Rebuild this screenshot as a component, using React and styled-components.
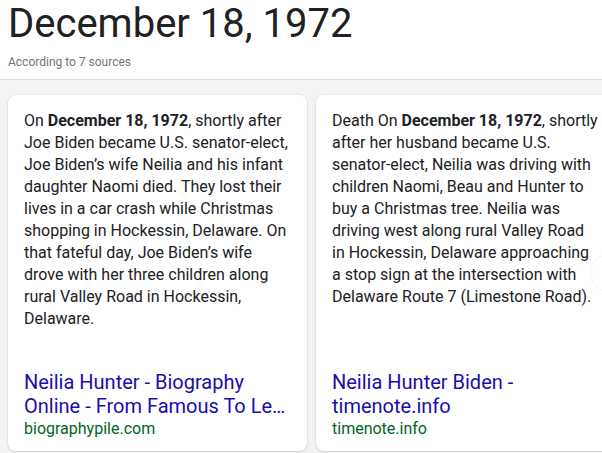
import React from 'react';
import styled, { createGlobalStyle } from 'styled-components';

const GlobalStyle = createGlobalStyle`
  html, body {
    margin: 0;
    padding: 0;
    background: #f3f3f3;
    font-family: Roboto, "Liberation Sans", Arial, sans-serif;
    overflow: hidden;
  }
`;

const Page = styled.div`
  width: 602px;
  height: 453px;
  position: relative;
  overflow: hidden;
`;

const Header = styled.header`
  background: #fff;
  padding: 0 8px 9px;
  border-bottom: 1px solid #dadce0;
`;

const Title = styled.h1`
  margin: 0;
  font-size: 40px;
  line-height: 48px;
  font-weight: 400;
  color: #202124;
`;

const Sources = styled.div`
  margin-top: 6px;
  font-size: 12px;
  line-height: 16px;
  color: #70757a;
`;

const Carousel = styled.div`
  display: flex;
  gap: 9px;
  padding: 15px 8px 0;
`;

const Card = styled.div`
  flex: 0 0 299px;
  height: 356px;
  box-sizing: border-box;
  display: flex;
  flex-direction: column;
  background: #fff;
  border-radius: 8px;
  padding: 15px 16px 11px;
  box-shadow: 0 1px 2px rgba(60, 64, 67, 0.18), 0 0 0 1px rgba(0, 0, 0, 0.03);
`;

const Snippet = styled.p`
  margin: 0;
  font-size: 16px;
  line-height: 22px;
  color: #202124;

  b {
    font-weight: 700;
  }
`;

const Source = styled.a`
  margin-top: auto;
  display: block;
  text-decoration: none;
`;

const SourceTitle = styled.div`
  font-size: 20px;
  line-height: 24px;
  color: #1a0dab;
  max-height: 48px;
  overflow: hidden;
`;

const SourceSite = styled.div`
  font-size: 16px;
  line-height: 22px;
  color: #006621;
`;

const NextButton = styled.div`
  position: absolute;
  left: 591px;
  top: 255px;
  width: 36px;
  height: 36px;
  border-radius: 50%;
  background: #fff;
  box-shadow: 0 0 0 1px rgba(0, 0, 0, 0.035);
`;

const cards = [
  {
    before: 'On ',
    bold: 'December 18, 1972',
    after:
      ', shortly after Joe Biden became U.S. senator-elect, Joe Biden’s wife Neilia and his infant daughter Naomi died. They lost their lives in a car crash while Christmas shopping in Hockessin, Delaware. On that fateful day, Joe Biden’s wife drove with her three children along rural Valley Road in Hockessin, Delaware.',
    title: 'Neilia Hunter - Biography Online - From Famous To Le…',
    site: 'biographypile.com',
  },
  {
    before: 'Death On ',
    bold: 'December 18, 1972',
    after:
      ', shortly after her husband became U.S. senator-elect, Neilia was driving with children Naomi, Beau and Hunter to buy a Christmas tree. Neilia was driving west along rural Valley Road in Hockessin, Delaware approaching a stop sign at the intersection with Delaware Route 7 (Limestone Road).',
    title: 'Neilia Hunter Biden - timenote.info',
    site: 'timenote.info',
  },
];

const App = () => (
  <Page>
    <GlobalStyle />
    <Header>
      <Title>December 18, 1972</Title>
      <Sources>According to 7 sources</Sources>
    </Header>
    <Carousel>
      {cards.map((card) => (
        <Card key={card.site}>
          <Snippet>
            {card.before}
            <b>{card.bold}</b>
            {card.after}
          </Snippet>
          <Source href="#">
            <SourceTitle>{card.title}</SourceTitle>
            <SourceSite>{card.site}</SourceSite>
          </Source>
        </Card>
      ))}
    </Carousel>
    <NextButton />
  </Page>
);

export default App;
